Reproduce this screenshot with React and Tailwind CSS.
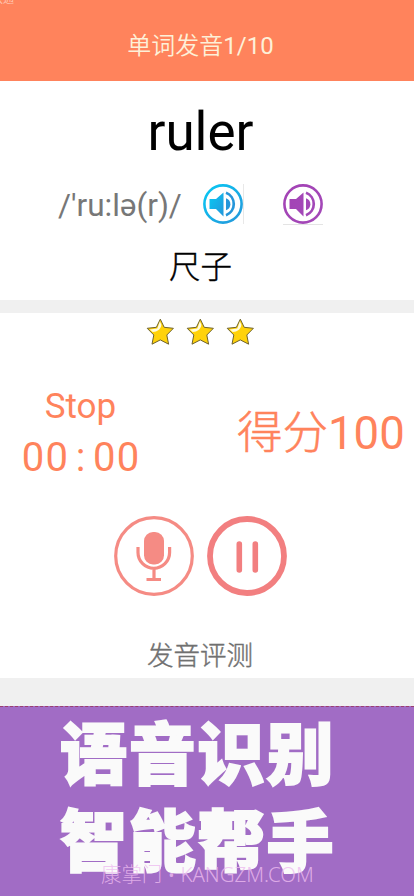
import React from "react";

function Speaker({ id, from, to }) {
  return (
    <svg className="h-10 w-10 shrink-0" viewBox="0 0 40 40" fill="none">
      <defs>
        <linearGradient id={id} x1="0" y1="0" x2="1" y2="1">
          <stop offset="0" stopColor={from} />
          <stop offset="1" stopColor={to} />
        </linearGradient>
      </defs>
      <circle cx="20" cy="20" r="18.600" stroke={`url(#${id})`} strokeWidth="2.600" />
      <path d="M6.500 15h6.500L20.500 8.500v24L13 25H6.500z" fill={`url(#${id})`} />
      <path d="M23 14.300a6.300 6.300 0 0 1 0 12z" fill={to} />
      <path d="M23 8.700a12.100 12.100 0 0 1 0 22.600" stroke={to} strokeWidth="2.700" />
    </svg>
  );
}

function Star() {
  return (
    <svg className="h-7 w-7" viewBox="0 0 28 28">
      <path
        d="M14.300 1.200l3.900 8.100 9.200 1-6.600 6.700 1.800 9.200-8.300-4.300-8.300 4.300 1.800-9.200-6.600-6.700 9.200-1z"
        fill="#ffd20a"
        stroke="#6e6330"
        strokeWidth="1"
        strokeLinejoin="round"
      />
      <path d="M13.800 3.500l-2.500 7-7.500 1 3 2.500c4.500-.2 8-2.500 8.600-7.200z" fill="#fffbe0" />
    </svg>
  );
}

function MicButton() {
  return (
    <svg className="h-20 w-20" viewBox="0 0 80 80" fill="none" stroke="#f58b84">
      <circle cx="40" cy="40" r="38.300" strokeWidth="3.200" />
      <rect x="30" y="16" width="20" height="32.500" rx="9" fill="#f58b84" stroke="none" />
      <path d="M24 31v5.500a15.800 15.800 0 0 0 31.600 0v-5.500M40 52.500v10.500M32.500 63.500h14.500" strokeWidth="3.200" />
    </svg>
  );
}

function PauseButton() {
  return (
    <svg className="h-20 w-20" viewBox="0 0 80 80" fill="none" stroke="#f27f80">
      <circle cx="40" cy="40" r="37" strokeWidth="5.800" />
      <path d="M32.300 28v26M48.300 28v26" strokeWidth="5.600" strokeLinecap="round" />
    </svg>
  );
}

export default function App() {
  return (
    <div className="relative flex h-[896px] w-[414px] flex-col overflow-hidden bg-[#f0f0f0] font-['Roboto','Noto_Sans_CJK_SC',sans-serif]">
      <header className="flex h-[81px] items-center justify-center bg-[#ff835c] pr-[13px] pt-[11px] text-2xl text-[#fdf0d8]">
        <span><span className="font-[350]">单词发音</span>1/10</span>
      </header>
      <span className="absolute -left-2 -top-[6px] text-[11px] leading-[12px] text-[#ffc5b1]">联通</span>

      <section className="flex h-[219px] flex-col bg-white">
        <h1 className="mt-5 h-[62px] pr-[13px] text-center text-[53px] leading-[62px] text-black">ruler</h1>
        <div className="mt-5 flex h-[42px] items-center pl-[58px]">
          <span className="w-[145px] pt-[3px] text-[31.5px] leading-10 text-[#777]">/'ru:lə(r)/</span>
          <Speaker id="blue" from="#08c9f4" to="#2596da" />
          <span className="h-10 w-px bg-[#e8e8e8]" />
          <div className="ml-[39px] border-b border-[#e4e4e4]">
            <Speaker id="purple" from="#a343b5" to="#a348b8" />
          </div>
        </div>
        <div className="mt-[23px] pr-[13px] text-center text-[31.5px] font-light leading-10 text-black [-webkit-text-stroke:0.4px_black]">尺子</div>
      </section>

      <section className="mt-[13px] flex h-[365px] flex-col bg-white">
        <div className="mt-[5px] flex gap-3 pl-[146px]">
          <Star />
          <Star />
          <Star />
        </div>
        <div className="mt-[38px] flex h-[104px] text-[#ff835c]">
          <div className="ml-[21px] w-[120px] text-center">
            <div className="pr-px pt-[2px] text-[35px] leading-[42px]">Stop</div>
            <div className="mt-[5px] flex text-[40px] leading-[50px]">
              {"00:00".split("").map((char, i) => (
                <span key={i} className="w-[23.8px] text-center">{char}</span>
              ))}
            </div>
          </div>
          <div className="ml-[96px] whitespace-nowrap pt-[22px] text-[45.5px] leading-[56px]">
            <span className="font-light [-webkit-text-stroke:0.5px_#ff835c]">得分</span>100
          </div>
        </div>
        <div className="mt-7 flex gap-[13px] pl-[114px]">
          <MicButton />
          <PauseButton />
        </div>
        <div className="mt-[40px] pr-[14px] text-center text-[26.500px] font-light leading-10 text-[#707070] [-webkit-text-stroke:0.4px_#707070]">发音评测</div>
      </section>

      <section className="mt-7 h-[190px] border-t border-dashed border-[#9b3e70] bg-[#a16cc5] pl-[60px]">
        <p className="-mt-px whitespace-nowrap font-['Noto_Sans_CJK_SC',sans-serif] text-[67px] font-black leading-[87px] tracking-[1.8px] text-[#fafafa] [-webkit-text-stroke:2px_#fafafa]">
          语音识别
          <br />
          智能帮手
        </p>
      </section>
      <div className="absolute left-[101px] top-[862px] whitespace-nowrap font-['Noto_Sans','Noto_Sans_CJK_SC',sans-serif] text-[20.4px] font-light leading-6 text-[#eebcf0]/80">
        康掌门 • KANGZM.COM
      </div>
    </div>
  );
}
